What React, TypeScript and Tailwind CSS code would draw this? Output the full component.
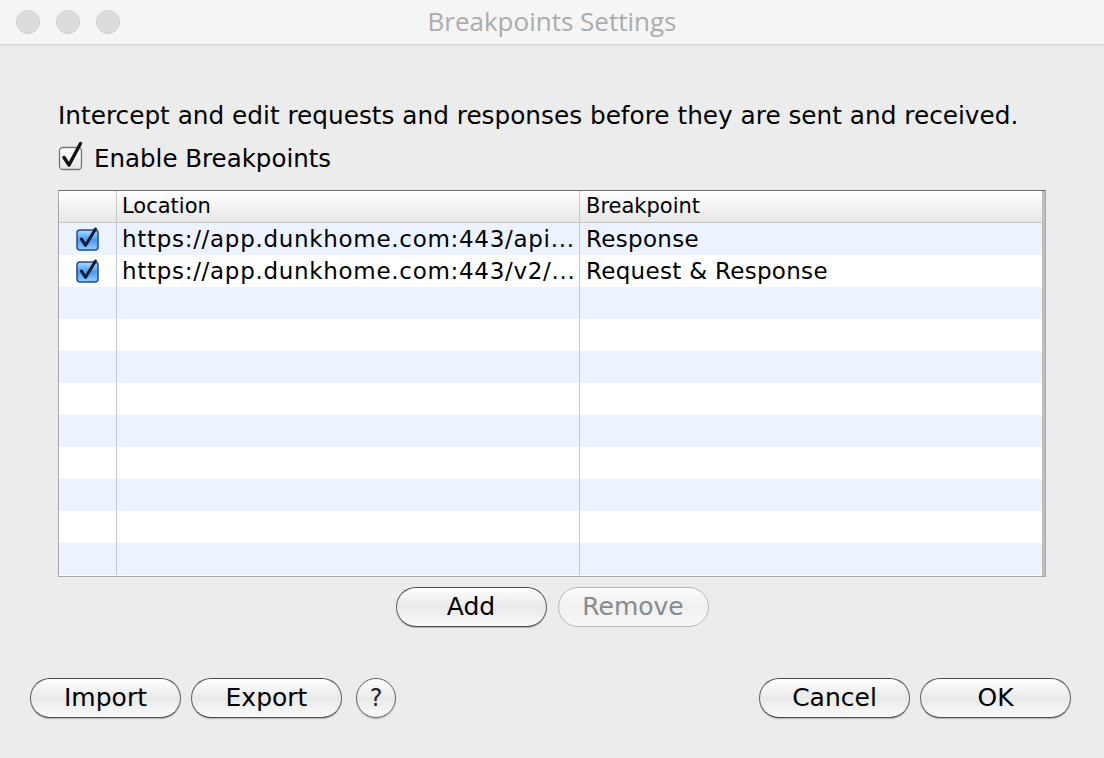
import React from "react";

function AquaButton({ label, disabled = false, w = "w-[151px]" }: { label: string; disabled?: boolean; w?: string }) {
  return (
    <div
      className={`${w} h-[40px] rounded-full flex items-center justify-center text-[25px] leading-none border ${
        disabled
          ? "border-[#b9b9b9] text-[#8a8a8a] bg-gradient-to-b from-[#fbfbfb] via-[#f0f0f0] to-[#f7f7f7]"
          : "border-[#666] border-t-[#4a4a4a] border-b-[#505050] text-black bg-gradient-to-b from-[#ffffff] via-[#e9e9e9] to-[#fafafa] shadow-[0_1px_1px_rgba(0,0,0,0.25)]"
      }`}
    >
      <span className="pb-[1px]">{label}</span>
    </div>
  );
}

function BigCheck() {
  return (
    <svg width="28" height="30" viewBox="0 0 28 30">
      <defs>
        <linearGradient id="cbg" x1="0" y1="0" x2="0" y2="1">
          <stop offset="0" stopColor="#ffffff" />
          <stop offset="1" stopColor="#e6e6e6" />
        </linearGradient>
      </defs>
      <rect x="1.5" y="6.5" width="22" height="22" rx="3.5" fill="url(#cbg)" stroke="#777" strokeWidth="1.3" />
      <path d="M6 16.5 L11 24 L22.5 2.5" fill="none" stroke="#111" strokeWidth="3.4" strokeLinecap="round" strokeLinejoin="round" />
    </svg>
  );
}

function BlueCheck() {
  return (
    <svg width="26" height="26" viewBox="0 0 26 26">
      <defs>
        <linearGradient id="bbg" x1="0" y1="0" x2="0" y2="1">
          <stop offset="0" stopColor="#b3dafc" />
          <stop offset="0.5" stopColor="#4a9bf0" />
          <stop offset="1" stopColor="#93cfff" />
        </linearGradient>
      </defs>
      <rect x="2" y="4" width="21" height="20" rx="3" fill="url(#bbg)" stroke="#1f4d8a" strokeWidth="1.5" />
      <path d="M6.5 13 L10.5 19.5 L20.5 3" fill="none" stroke="#0d1a33" strokeWidth="3" strokeLinecap="round" strokeLinejoin="round" />
    </svg>
  );
}

const rows = [
  { loc: "https://app.dunkhome.com:443/api...", bp: "Response" },
  { loc: "https://app.dunkhome.com:443/v2/...", bp: "Request & Response" },
];

export default function App() {
  const rowCount = 11;
  return (
    <div className="w-[1104px] h-[758px] bg-[#ececec] flex flex-col font-['DejaVu_Sans',sans-serif] text-black overflow-hidden">
      {/* Title bar */}
      <div className="h-[45px] shrink-0 bg-[#f5f5f5] border-b border-[#d6d6d6] shadow-[0_1px_0_#e4e4e4] flex items-center relative">
        <div className="flex gap-[16px] pl-[16px]">
          <div className="w-[24px] h-[24px] rounded-full bg-[#dcdcdc] border border-[#d2d2d2]" />
          <div className="w-[24px] h-[24px] rounded-full bg-[#dcdcdc] border border-[#d2d2d2]" />
          <div className="w-[24px] h-[24px] rounded-full bg-[#dcdcdc] border border-[#d2d2d2]" />
        </div>
        <div className="absolute inset-0 flex items-center justify-center text-[26px] leading-none text-[#acacac] font-['Open_Sans',sans-serif] pb-[3px]">
          Breakpoints Settings
        </div>
      </div>

      <div className="pl-[58px] pt-[56px]">
        <div className="text-[24.75px] leading-[30px] whitespace-nowrap">
          Intercept and edit requests and responses before they are sent and received.
        </div>
        <div className="flex items-start mt-[13px] gap-[8px] h-[30px]">
          <div className="-mt-[3px]">
            <BigCheck />
          </div>
          <span className="text-[24.5px] leading-[30px]">Enable Breakpoints</span>
        </div>

        {/* Table */}
        <div className="mt-[16px] w-[988px] h-[387px] border border-[#a8a8a8] border-t-[#6f6f6f] bg-white flex flex-col overflow-hidden relative">
          <div className="h-[32px] shrink-0 flex bg-gradient-to-b from-[#ffffff] via-[#f3f3f3] to-[#e6e6e6] border-b border-[#c4c4c4] text-[21px] leading-none">
            <div className="w-[58px] border-r border-[#c8c8c8]" />
            <div className="w-[463px] border-r border-[#c8c8c8] pl-[5px] flex items-center">Location</div>
            <div className="flex-1 pl-[6px] flex items-center">Breakpoint</div>
          </div>
          <div className="flex-1 relative">
            {Array.from({ length: rowCount }).map((_, i) => (
              <div key={i} className={`h-[32px] flex text-[23px] leading-none ${i % 2 === 0 ? "bg-[#edf3fe]" : "bg-white"}`}>
                <div className="w-[58px] border-r border-[#c4c8d0] flex items-center justify-center pl-[1px]">
                  {rows[i] ? <BlueCheck /> : null}
                </div>
                <div className="w-[463px] border-r border-[#c4c8d0] pl-[5px] flex items-center whitespace-nowrap overflow-hidden tracking-[0.7px]">
                  {rows[i]?.loc}
                </div>
                <div className="flex-1 pl-[6px] flex items-center whitespace-nowrap tracking-[0.3px]">{rows[i]?.bp}</div>
              </div>
            ))}
          </div>
          <div className="absolute right-0 top-0 bottom-0 w-[3px] bg-[#bdbdbd]" />
        </div>

        <div className="w-[988px] flex justify-center gap-[11px] mt-[10px]">
          <AquaButton label="Add" />
          <AquaButton label="Remove" disabled />
        </div>
      </div>

      <div className="flex justify-between items-center pl-[30px] pr-[33px] mt-[51px]">
        <div className="flex items-center gap-[10px]">
          <AquaButton label="Import" />
          <AquaButton label="Export" />
          <div className="ml-[4px] w-[40px] h-[40px] rounded-full border border-[#666] bg-gradient-to-b from-white via-[#e9e9e9] to-[#fafafa] shadow-[0_1px_1px_rgba(0,0,0,0.25)] flex items-center justify-center text-[24px] leading-none font-medium text-[#222]">
            ?
          </div>
        </div>
        <div className="flex items-center gap-[10px]">
          <AquaButton label="Cancel" />
          <AquaButton label="OK" />
        </div>
      </div>
    </div>
  );
}
